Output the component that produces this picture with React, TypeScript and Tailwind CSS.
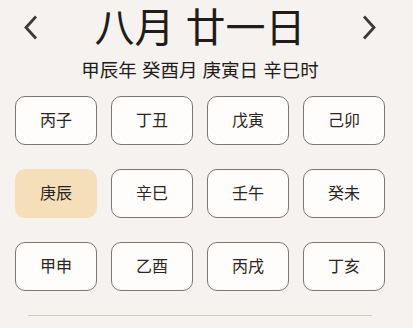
import React from "react";

const GANZHI = [
  "丙子", "丁丑", "戊寅", "己卯",
  "庚辰", "辛巳", "壬午", "癸未",
  "甲申", "乙酉", "丙戌", "丁亥",
];

const SELECTED = "庚辰";

function Chevron({ dir }: { dir: "left" | "right" }) {
  return (
    <svg width="16" height="26" viewBox="0 0 16 26" fill="none">
      <path
        d={dir === "left" ? "M13 1.5 L3 12.5 L13 23.5" : "M3 1.5 L13 12.5 L3 23.5"}
        stroke="#3d3a35"
        strokeWidth="2.8"
        strokeLinecap="butt"
        strokeLinejoin="miter"
      />
    </svg>
  );
}

export default function App() {
  return (
    <div
      className="w-[413px] h-[328px] bg-[#f6f2f0] text-[#1f1c1a] overflow-hidden"
      style={{ fontFamily: '"Liberation Sans", "Noto Sans CJK SC", sans-serif' }}
    >
      <div className="w-[400px] px-[15px]">
        {/* Header */}
        <div className="flex items-center justify-between px-[8px] pt-[4px] h-[51px]">
          <button className="flex items-center">
            <Chevron dir="left" />
          </button>
          <h1 className="text-[40px] leading-[48px] font-normal">八月 廿一日</h1>
          <button className="flex items-center">
            <Chevron dir="right" />
          </button>
        </div>

        <p className="text-center text-[18.5px] leading-[24px] mt-[8px] text-[#1f1c1a]">
          甲辰年 癸酉月 庚寅日 辛巳时
        </p>

        {/* Grid */}
        <div className="grid grid-cols-4 gap-x-[14px] gap-y-[24px] mt-[13px]">
          {GANZHI.map((g) =>
            g === SELECTED ? (
              <button
                key={g}
                className="h-[49px] rounded-[10px] bg-[#f5dfbb] text-[16px] text-[#2a2520]"
              >
                {g}
              </button>
            ) : (
              <button
                key={g}
                className="h-[49px] rounded-[10px] border-[1.5px] border-[#7d7670] bg-[#fffcfc] text-[16px] text-[#2a2520]"
              >
                {g}
              </button>
            )
          )}
        </div>

        <div className="mx-[13px] mt-[24px] h-px bg-[#d6cec5]" />
      </div>
    </div>
  );
}
